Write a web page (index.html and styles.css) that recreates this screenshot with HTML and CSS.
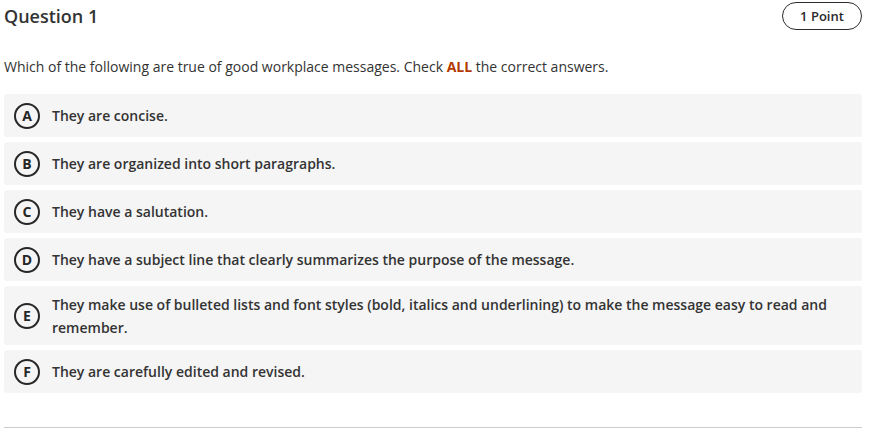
FILE: index.html
```html
<!DOCTYPE html>
<html lang="en">
<head>
<meta charset="utf-8">
<title>Question 1</title>
<link rel="stylesheet" href="styles.css">
</head>
<body>
<div class="question">
  <div class="header">
    <h2 class="title">Question 1</h2>
    <span class="points">1 Point</span>
  </div>
  <p class="prompt">Which of the following are true of good workplace messages. Check <strong class="hl">ALL</strong> the correct answers.</p>
  <ul class="options">
    <li class="option"><span class="letter">A</span><span class="text">They are concise.</span></li>
    <li class="option"><span class="letter">B</span><span class="text">They are organized into short paragraphs.</span></li>
    <li class="option"><span class="letter">C</span><span class="text">They have a salutation.</span></li>
    <li class="option"><span class="letter">D</span><span class="text">They have a subject line that clearly summarizes the purpose of the message.</span></li>
    <li class="option"><span class="letter">E</span><span class="text">They make use of bulleted lists and font styles (bold, italics and underlining) to make the message easy to read and remember.</span></li>
    <li class="option"><span class="letter">F</span><span class="text">They are carefully edited and revised.</span></li>
  </ul>
  <hr class="sep">
</div>
</body>
</html>
```
FILE: styles.css
```css
html, body {
  margin: 0;
  padding: 0;
  background: #fff;
}
body {
  font-family: "Open Sans", "Liberation Sans", sans-serif;
  color: #333;
}
.question {
  width: 858px;
  padding: 2px 0 0 4px;
}
.header {
  display: flex;
  align-items: center;
  justify-content: space-between;
  height: 28px;
}
.title {
  margin: 0;
  font-size: 18px;
  font-weight: 600;
  color: #333;
  line-height: 28px;
}
.points {
  box-sizing: border-box;
  width: 80px;
  height: 28px;
  border: 1px solid #2b2b2b;
  border-radius: 14px;
  display: flex;
  align-items: center;
  justify-content: center;
  font-size: 13px;
  font-weight: 600;
  color: #2b2b2b;
}
.prompt {
  margin: 27px 0 0;
  font-size: 14px;
  line-height: 20px;
  color: #333;
}
.hl {
  color: #b33a00;
  font-weight: 700;
}
.options {
  list-style: none;
  margin: 17px 0 0;
  padding: 0;
  display: flex;
  flex-direction: column;
  gap: 5px;
}
.option {
  box-sizing: border-box;
  min-height: 43px;
  padding: 6.5px 10px 6.5px 10px;
  background: #f5f5f5;
  border-radius: 3px;
  display: flex;
  align-items: center;
  gap: 12px;
}
.letter {
  flex: none;
  box-sizing: border-box;
  width: 26px;
  height: 26px;
  border: 2px solid #262626;
  border-radius: 50%;
  display: flex;
  align-items: center;
  justify-content: center;
  font-size: 14px;
  font-weight: 700;
  line-height: 1;
  color: #262626;
}
.text {
  font-size: 14px;
  font-weight: 600;
  line-height: 23px;
  color: #333;
}
.sep {
  margin: 34px 0 0;
  border: 0;
  border-top: 1px solid #ccc;
  height: 0;
}
```
